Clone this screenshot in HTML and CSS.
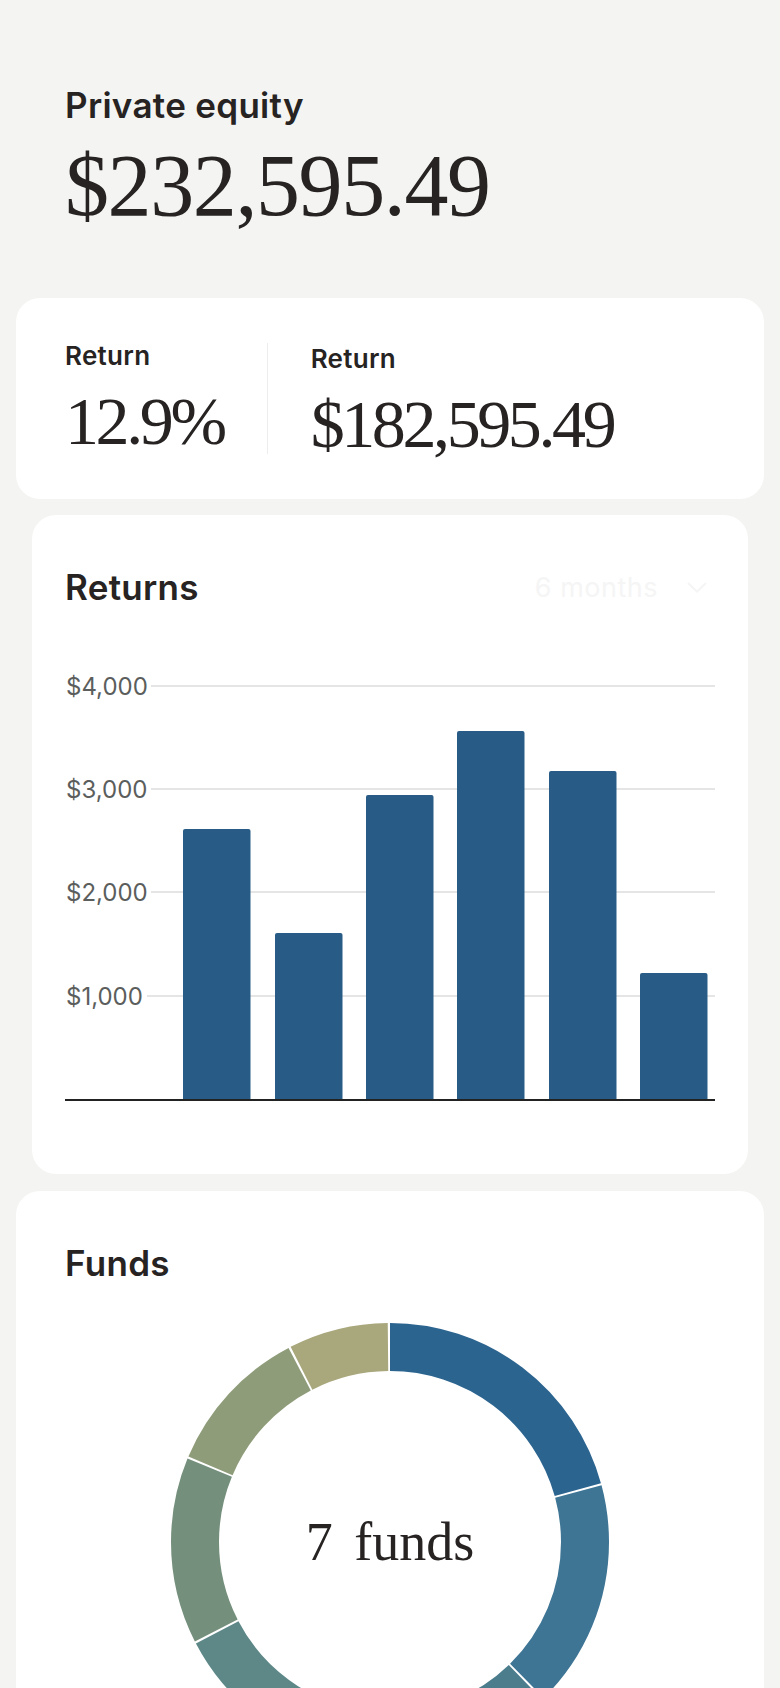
FILE: index.html
```html
<!DOCTYPE html>
<html lang="en">
<head>
  <meta charset="UTF-8" />
  <title>Private equity</title>
  <meta name="viewport" content="width=device-width, initial-scale=1.0" />
  <link rel="stylesheet" href="styles.css">
</head>
<body>
  <header class="summary">
    <div class="summary-label">Private equity</div>
    <div class="summary-amount">$232,595.49</div>
  </header>

  <section class="card stats">
    <div class="stat">
      <div class="stat-label">Return</div>
      <div class="stat-value">12.9%</div>
    </div>
    <div class="stat-divider"></div>
    <div class="stat stat-shifted">
      <div class="stat-label">Return</div>
      <div class="stat-value">$182,595.49</div>
    </div>
  </section>

  <section class="card card-inset returns">
    <div class="card-head">
      <h2 class="card-title">Returns</h2>
      <button class="range">
        <span>6 months</span>
        <svg width="20" height="11" viewBox="0 0 20 11"><polyline points="1,1 10,9.5 19,1" fill="none" stroke="currentColor" stroke-width="2"/></svg>
      </button>
    </div>

    <svg class="bar-chart" width="650" height="440" viewBox="0 0 650 440">
      <g class="axis-labels">
        <text x="1" y="26">$4,000</text>
        <text x="1" y="129">$3,000</text>
        <text x="1" y="232">$2,000</text>
        <text x="1" y="336">$1,000</text>
      </g>
      <g class="gridlines">
        <line x1="86" x2="650" y1="17" y2="17"/>
        <line x1="86" x2="650" y1="120" y2="120"/>
        <line x1="86" x2="650" y1="223" y2="223"/>
        <line x1="82" x2="650" y1="327" y2="327"/>
      </g>
      <g class="bars">
        <rect x="118" y="160" width="67.5" height="272" rx="2"/>
        <rect x="210" y="264" width="67.5" height="168" rx="2"/>
        <rect x="301" y="126" width="67.5" height="306" rx="2"/>
        <rect x="392" y="62" width="67.5" height="370" rx="2"/>
        <rect x="484" y="102" width="67.5" height="330" rx="2"/>
        <rect x="575" y="304" width="67.5" height="128" rx="2"/>
      </g>
      <rect class="axis" x="0" y="430" width="650" height="2"/>
    </svg>
  </section>

  <section class="card funds">
    <h2 class="card-title">Funds</h2>
    <div class="donut">
      <svg width="438" height="438" viewBox="0 0 438 438">
        <g transform="rotate(-90 219 219)" fill="none" stroke-width="48">
          <circle cx="219" cy="219" r="195" pathLength="360" stroke="#2c6490" stroke-dasharray="74.4 400" stroke-dashoffset="0"/>
          <circle cx="219" cy="219" r="195" pathLength="360" stroke="#3e7494" stroke-dasharray="60.4 400" stroke-dashoffset="-75"/>
          <circle cx="219" cy="219" r="195" pathLength="360" stroke="#4b7d8d" stroke-dasharray="53.4 400" stroke-dashoffset="-136"/>
          <circle cx="219" cy="219" r="195" pathLength="360" stroke="#5e8888" stroke-dasharray="52.4 400" stroke-dashoffset="-190"/>
          <circle cx="219" cy="219" r="195" pathLength="360" stroke="#748f7b" stroke-dasharray="49.4 400" stroke-dashoffset="-243"/>
          <circle cx="219" cy="219" r="195" pathLength="360" stroke="#8f9c7a" stroke-dasharray="39.4 400" stroke-dashoffset="-293"/>
          <circle cx="219" cy="219" r="195" pathLength="360" stroke="#a9a77c" stroke-dasharray="26.4 400" stroke-dashoffset="-333"/>
        </g>
      </svg>
      <div class="donut-label">7 funds</div>
    </div>
  </section>
</body>
</html>
```

FILE: styles.css
```css
body {
  margin: 0;
  background: #f4f4f2;
  color: #262322;
  font-family: Inter, 'Noto Sans', sans-serif;
}

.summary {
  padding: 85px 65px 0;
  margin-bottom: 62px;
}

.summary-label {
  font-size: 35px;
  line-height: 40px;
  font-weight: 600;
  letter-spacing: 0.3px;
}

.summary-amount {
  margin-top: 11px;
  font-family: 'Liberation Serif', serif;
  font-size: 88px;
  line-height: 100px;
  letter-spacing: -1.4px;
}

.card {
  background: #fff;
  border-radius: 24px;
  margin: 0 16px 16px;
  padding: 0 49px;
}

.card-inset {
  margin: 0 32px 17px;
  padding: 0 33px;
}

/* stats */
.stats {
  display: flex;
  gap: 43px;
  padding-top: 43px;
  padding-bottom: 40px;
}

.stat-shifted {
  padding-top: 3px;
  margin-bottom: -3px;
}

.stat-label {
  font-size: 26px;
  line-height: 30px;
  font-weight: 600;
  letter-spacing: 0.3px;
}

.stat-value {
  margin-top: 12px;
  font-family: 'Liberation Serif', serif;
  font-size: 68px;
  line-height: 76px;
  letter-spacing: -3.4px;
}

.stat-divider {
  width: 1px;
  margin: 2px 0 5px;
  background: #ededed;
}

/* returns chart */
.returns {
  padding-top: 52px;
  padding-bottom: 65px;
}

.card-head {
  display: flex;
  justify-content: space-between;
  align-items: center;
  margin-bottom: 62px;
}

.card-title {
  margin: 0;
  font-size: 35px;
  line-height: 40px;
  font-weight: 600;
  letter-spacing: 0.3px;
}

.range {
  display: flex;
  align-items: center;
  gap: 29px;
  margin-right: 8px;
  padding: 0;
  border: none;
  background: none;
  color: #f5f5f5;
  font-family: Inter, sans-serif;
  font-size: 27px;
  letter-spacing: 0.5px;
}

.bar-chart {
  display: block;
}

.axis-labels {
  font-family: Inter, sans-serif;
  font-size: 24px;
  fill: #5b5e5c;
}

.gridlines line {
  stroke: #e5e5e5;
  stroke-width: 2;
}

.bars rect {
  fill: #285c86;
}

.axis {
  fill: #222;
}

/* funds */
.funds {
  padding-top: 52px;
  padding-bottom: 60px;
}

.donut {
  display: grid;
  justify-items: center;
  align-items: center;
  margin-top: 40px;
}

.donut svg,
.donut-label {
  grid-area: 1 / 1;
}

.donut-label {
  font-family: 'Liberation Serif', serif;
  font-size: 54px;
  line-height: 54px;
  word-spacing: 8px;
}
```
